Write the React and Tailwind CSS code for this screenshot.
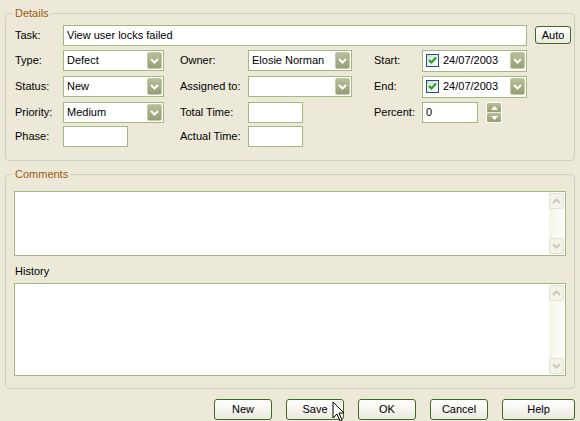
import React from "react";

const font = { fontFamily: '"Liberation Sans", Arial, sans-serif' };

function Chevron({ up = false, color = "#ffffff" }) {
  return (
    <svg width="9" height="6" viewBox="0 0 9 6">
      <polyline
        points={up ? "1,5 4.5,1.5 8,5" : "1,1 4.5,4.5 8,1"}
        fill="none"
        stroke={color}
        strokeWidth="2"
      />
    </svg>
  );
}

function DropButton() {
  return (
    <span className="flex h-[17px] w-[15px] items-center justify-center rounded-[2px] border border-[#c3c9ad] bg-gradient-to-b from-[#b7bf98] to-[#959f72]">
      <Chevron />
    </span>
  );
}

function TextBox({ w, value = "", className = "" }) {
  return (
    <div
      className={`flex h-[21px] items-center border border-[#a4b97f] bg-white pl-[3px] text-[11px] text-black ${className}`}
      style={{ width: w }}
    >
      {value}
    </div>
  );
}

function Select({ w, value = "" }) {
  return (
    <div
      className="flex h-[21px] items-center justify-between border border-[#a4b97f] bg-white pl-[3px] pr-[1px] text-[11px] text-black"
      style={{ width: w }}
    >
      <span>{value}</span>
      <DropButton />
    </div>
  );
}

function DateBox({ value }) {
  return (
    <div className="flex h-[22px] w-[105px] items-center border border-[#a4b97f] bg-white pl-[3px] pr-[1px] text-[11px] text-black">
      <span className="flex h-[13px] w-[13px] items-center justify-center border border-[#1c5180] bg-gradient-to-br from-[#dcdcd4] to-white">
        <svg width="9" height="9" viewBox="0 0 9 9">
          <polyline points="1,4 3.5,6.5 8,1.5" fill="none" stroke="#21a121" strokeWidth="2" />
        </svg>
      </span>
      <span className="ml-[4px] flex-1">{value}</span>
      <DropButton />
    </div>
  );
}

function Label({ w, children }) {
  return (
    <span className="text-[11px] text-black" style={{ width: w, display: "inline-block" }}>
      {children}
    </span>
  );
}

function ScrollBtn({ up }) {
  return (
    <span className="flex h-[16px] w-[15px] items-center justify-center rounded-[2px] border border-[#e3e0d0] bg-[#f4f2e9]">
      <Chevron up={up} color="#cbc8b9" />
    </span>
  );
}

function TextArea({ h }) {
  return (
    <div className="flex justify-end border border-[#a4b97f] bg-white p-[1px]" style={{ height: h }}>
      <div className="flex w-[15px] flex-col justify-between bg-gradient-to-r from-[#f5f4ea] to-[#fefefa]">
        <ScrollBtn up />
        <ScrollBtn />
      </div>
    </div>
  );
}

function Btn({ children, w = 58 }) {
  return (
    <button
      className="flex h-[21px] items-center justify-center rounded-[3px] border border-[#3d6b22] bg-gradient-to-b from-white to-[#ebe9df] text-[11px] text-black"
      style={{ width: w }}
    >
      {children}
    </button>
  );
}

export default function App() {
  return (
    <div className="relative h-[421px] w-[580px] overflow-hidden bg-[#ece9d8] pt-[7px]" style={font}>
      <fieldset className="mx-[5px] rounded-[4px] border border-[#d0d0bf] pb-[14px] pl-[9px]">
        <legend className="ml-[-2px] px-[2px] text-[11px] leading-[13px] text-[#99590f]">Details</legend>

        <div className="mt-[5px] flex h-[20px] items-center">
          <Label w={48}>Task:</Label>
          <TextBox w={464} value="View user locks failed" className="h-[20px]" />
          <button className="ml-[8px] flex h-[18px] w-[36px] items-center justify-center rounded-[3px] border border-[#3d6b22] bg-gradient-to-b from-white to-[#ebe9df] text-[11px] text-black">
            Auto
          </button>
        </div>

        <div className="mt-[4px] flex h-[23px] items-center">
          <Label w={48}>Type:</Label>
          <Select w={101} value="Defect" />
          <span className="w-[16px]" />
          <Label w={68}>Owner:</Label>
          <Select w={104} value="Elosie Norman" />
          <span className="w-[22px]" />
          <Label w={48}>Start:</Label>
          <DateBox value="24/07/2003" />
        </div>

        <div className="mt-[3px] flex h-[23px] items-center">
          <Label w={48}>Status:</Label>
          <Select w={101} value="New" />
          <span className="w-[16px]" />
          <Label w={68}>Assigned to:</Label>
          <Select w={104} />
          <span className="w-[22px]" />
          <Label w={48}>End:</Label>
          <DateBox value="24/07/2003" />
        </div>

        <div className="mt-[4px] flex h-[21px] items-center">
          <Label w={48}>Priority:</Label>
          <Select w={101} value="Medium" />
          <span className="w-[16px]" />
          <Label w={68}>Total Time:</Label>
          <TextBox w={55} />
          <span className="w-[71px]" />
          <Label w={48}>Percent:</Label>
          <TextBox w={56} value="0" />
          <div className="ml-[8px] flex flex-col gap-[1px] border border-white">
            <span className="flex h-[9px] w-[14px] items-center justify-center rounded-[1px] bg-gradient-to-b from-[#b7bf98] to-[#959f72]">
              <svg width="7" height="4" viewBox="0 0 7 4">
                <polygon points="0,4 3.5,0 7,4" fill="#fff" />
              </svg>
            </span>
            <span className="flex h-[9px] w-[14px] items-center justify-center rounded-[1px] bg-gradient-to-b from-[#b7bf98] to-[#959f72]">
              <svg width="7" height="4" viewBox="0 0 7 4">
                <polygon points="0,0 3.5,4 7,0" fill="#fff" />
              </svg>
            </span>
          </div>
        </div>

        <div className="mt-[3px] flex h-[20px] items-center">
          <Label w={48}>Phase:</Label>
          <TextBox w={65} className="h-[20px]" />
          <span className="w-[52px]" />
          <Label w={68}>Actual Time:</Label>
          <TextBox w={55} className="h-[20px]" />
        </div>
      </fieldset>

      <fieldset className="mx-[5px] mt-[7px] rounded-[4px] border border-[#d0d0bf] px-[8px] pb-[12px]">
        <legend className="ml-[-1px] px-[2px] text-[11px] leading-[13px] text-[#99590f]">Comments</legend>
        <div className="mt-[10px]">
          <TextArea h={65} />
        </div>
        <div className="mt-[9px] pl-[1px] text-[11px] leading-[13px] text-black">History</div>
        <div className="mt-[5px]">
          <TextArea h={93} />
        </div>
      </fieldset>

      <div className="mt-[10px] flex justify-end gap-[14px] pr-[5px]">
        <Btn>New</Btn>
        <Btn>Save</Btn>
        <Btn>OK</Btn>
        <Btn>Cancel</Btn>
        <Btn w={73}>Help</Btn>
      </div>

      <svg className="absolute left-[332px] top-[401px]" width="14" height="22" viewBox="0 0 14 22">
        <polygon points="1,1 1,17 5,13 8,20 10,19 7,12 12,12" fill="#fff" stroke="#000" strokeWidth="1" />
      </svg>
    </div>
  );
}
